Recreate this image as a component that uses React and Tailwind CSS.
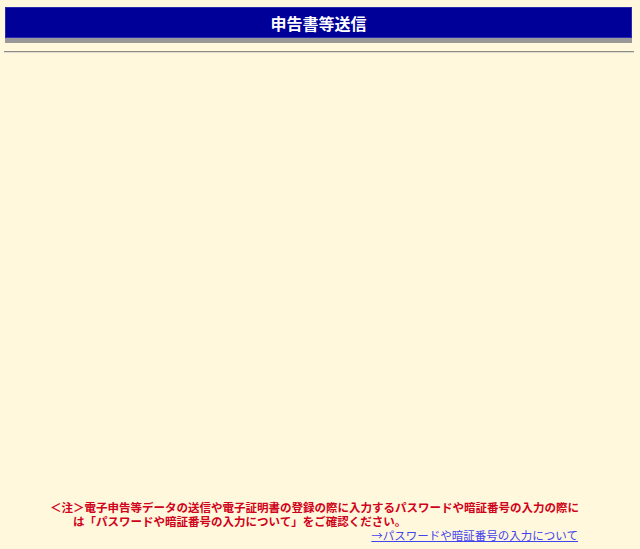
export default function App() {
  return (
    <div
      className="flex min-h-screen flex-col bg-[#fff8dc]"
      style={{ fontFamily: '"Noto Sans CJK JP", "Liberation Sans", sans-serif' }}
    >
      <div className="ml-[5px] mr-[8px] mt-[7px]">
        <div className="flex h-[31px] items-center justify-center border border-[#2a2ab0] bg-[#000099]">
          <h1 className="text-[16px] font-bold leading-none text-white">申告書等送信</h1>
        </div>
        <div className="h-[5px] bg-[#999999]" />
      </div>
      <div className="ml-[4px] mr-[6px] mt-[8px] border-t border-b border-t-[#8c8c8c] border-b-[#e0dccb]" />

      <div className="flex-1" />

      <div className="mb-[7px] ml-[50px] w-[528px] text-[11.5px] leading-[14px]">
        <p className="whitespace-nowrap font-bold text-[#d0021b]">
          ＜注＞電子申告等データの送信や電子証明書の登録の際に入力するパスワードや暗証番号の入力の際に
        </p>
        <p className="whitespace-nowrap pl-[23px] font-bold text-[#d0021b]">
          は「パスワードや暗証番号の入力について」をご確認ください。
        </p>
        <p className="whitespace-nowrap text-right">
          <a href="#" className="text-[#4444ee] underline">
            →パスワードや暗証番号の入力について
          </a>
        </p>
      </div>
    </div>
  )
}
